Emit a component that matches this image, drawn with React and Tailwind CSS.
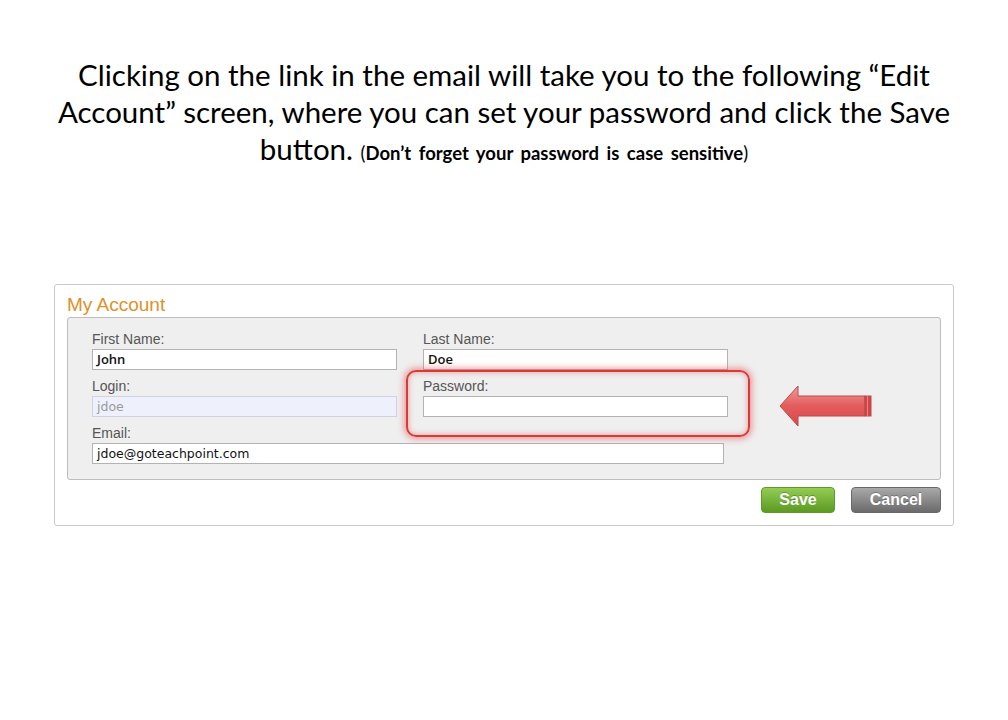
import React from 'react'

const labelCls = 'block h-[16px] leading-[16px] text-[14px] text-[#555] mb-[2px]'
const inputCls = 'block h-[21px] border border-[#b3b3b3] bg-white px-[4px] leading-[19px] text-[13px] text-[#111]'
const mono = { fontFamily: '"DejaVu Sans", sans-serif', fontSize: '12.5px' }
const semi = { fontFamily: '"Open Sans", sans-serif', fontSize: '13px' }

function Arrow() {
  return (
    <svg width="94" height="44" viewBox="0 0 94 44" className="absolute left-[711px] top-[66px]">
      <defs>
        <linearGradient id="shaft" x1="0" y1="0" x2="0" y2="1">
          <stop offset="0" stopColor="#f49a9a" />
          <stop offset="0.5" stopColor="#e35c5c" />
          <stop offset="1" stopColor="#d84848" />
        </linearGradient>
      </defs>
      {/* arrow body */}
      <polygon
        points="1,22 19,2 19,12 86,12 86,32 19,32 19,42"
        fill="url(#shaft)"
        stroke="#b94a4a"
        strokeWidth="1"
        strokeLinejoin="round"
      />
      {/* 3d end stripes */}
      <rect x="86" y="12" width="6" height="20" fill="#d24545" stroke="#b94a4a" strokeWidth="1" />
      <line x1="88.5" y1="12" x2="88.5" y2="32" stroke="#f08080" strokeWidth="1" />
    </svg>
  )
}

export default function App() {
  return (
    <div className="w-[1008px] h-[720px] bg-white" style={{ fontFamily: 'Lato, sans-serif' }}>
      <div className="pt-[56px] text-center text-[29.5px] leading-[37px] text-black">
        Clicking on the link in the email will take you to the following “Edit<br />
        Account” screen, where you can set your password and click the Save<br />
        button. <span className="text-[18.5px] [word-spacing:3px]">(<span className="font-bold">Don’t forget your password is case sensitive</span>)</span>
      </div>

      <div
        className="ml-[54px] mt-[112px] w-[900px] rounded-[3px] border border-[#c9c9c9] px-[12px] pb-[12px]"
        style={{ fontFamily: '"Liberation Sans", Arial, sans-serif' }}
      >
        <div className="h-[32px] pt-[10px] leading-[20px] text-[19px] text-[#e0902a]">My Account</div>

        <div className="relative h-[163px] rounded-[3px] border border-[#bdbdbd] bg-[#efefef] pl-[24px] pt-[13px]">
          <div className="flex gap-[26px]">
            <div className="w-[305px]">
              <span className={labelCls}>First Name:</span>
              <div className={`${inputCls} font-semibold`} style={semi}>John</div>
            </div>
            <div className="w-[305px]">
              <span className={labelCls}>Last Name:</span>
              <div className={`${inputCls} font-semibold`} style={semi}>Doe</div>
            </div>
          </div>

          <div className="mt-[8px] flex gap-[26px]">
            <div className="w-[305px]">
              <span className={labelCls}>Login:</span>
              <div className="block h-[21px] border border-[#cfd2e0] bg-[#eef0fc] px-[4px] leading-[19px] text-[#9a9a9a]" style={mono}>
                jdoe
              </div>
            </div>
            <div className="w-[305px]">
              <span className={labelCls}>Password:</span>
              <div className={inputCls}></div>
            </div>
          </div>

          <div className="mt-[8px] w-[632px]">
            <span className={labelCls}>Email:</span>
            <div className={inputCls} style={mono}>jdoe@goteachpoint.com</div>
          </div>

          {/* highlight around password */}
          <div className="absolute left-[338px] top-[52px] h-[67px] w-[344px] rounded-[10px] border-2 border-[#d83a3a] shadow-[0_0_6px_2px_rgba(230,80,80,0.55),inset_0_0_5px_1px_rgba(230,90,90,0.45)]" />
          <Arrow />
        </div>

        <div className="mt-[7px] flex justify-end gap-[16px]">
          <button className="h-[26px] w-[74px] rounded-[4px] border border-[#5f9a2a] bg-gradient-to-b from-[#93cd52] to-[#5c9a22] text-[16px] font-bold text-white [text-shadow:0_-1px_0_rgba(0,0,0,0.25)]">
            Save
          </button>
          <button className="h-[26px] w-[90px] rounded-[4px] border border-[#6a6a6a] bg-gradient-to-b from-[#a9a9a9] to-[#6b6b6b] text-[16px] font-bold text-white [text-shadow:0_-1px_0_rgba(0,0,0,0.25)]">
            Cancel
          </button>
        </div>
      </div>
    </div>
  )
}
